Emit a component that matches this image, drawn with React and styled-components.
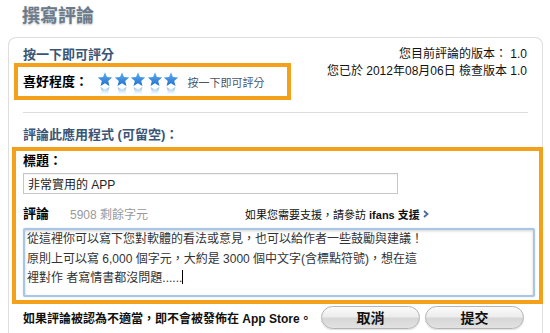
import React from "react";
import styled, { createGlobalStyle } from "styled-components";

const GlobalStyle = createGlobalStyle`
  * {
    box-sizing: border-box;
  }
  body {
    margin: 0;
    background: #fff;
    font-family: "Liberation Sans", Arial, "Noto Sans CJK TC", sans-serif;
    color: #111;
  }
`;

const Page = styled.div`
  width: 550px;
  height: 333px;
  overflow: hidden;
  background: #fff;
`;

const Title = styled.h1`
  margin: 0;
  height: 37px;
  padding: 4px 0 0 22px;
  font-size: 18px;
  line-height: 24px;
  font-weight: bold;
  color: #6b7a8b;
  text-shadow: 0 1px 2px rgba(0, 0, 0, 0.25);
`;

const Panel = styled.div`
  margin-left: 8px;
  width: 535px;
  height: 296px;
  border: 1px solid #dedede;
  border-bottom: none;
  border-radius: 8px 8px 0 0;
  padding: 0 0 0 5px;
  background: #fff;
`;

const HeaderRow = styled.div`
  display: flex;
  justify-content: space-between;
  padding-top: 8px;
`;

const Column = styled.div`
  display: flex;
  flex-direction: column;
`;

const SectionLabel = styled.div`
  padding-left: 9px;
  font-size: 13px;
  line-height: 17px;
  font-weight: bold;
  color: #3a5576;
`;

const InfoText = styled.div`
  padding-right: 15px;
  text-align: right;
  font-size: 12px;
  line-height: 17px;
  color: #111;
`;

const Highlight = styled.div`
  border: 4px solid #f5a01a;
  margin-left: ${(p) => p.$offset || 0}px;
  margin-right: ${(p) => p.$right || 0}px;
  padding: ${(p) => p.$pad};
`;

const RatingBox = styled(Highlight)`
  width: 277px;
  height: 37px;
  display: flex;
  align-items: center;
`;

const StrongLabel = styled.span`
  font-size: 13px;
  line-height: 17px;
  font-weight: bold;
  color: #000;
  width: ${(p) => (p.$width ? `${p.$width}px` : "auto")};
  flex-shrink: 0;
`;

const StarRow = styled.div`
  display: flex;
  align-self: flex-start;
  margin-top: 5px;
`;

const Hint = styled.span`
  margin-left: 8px;
  font-size: 11px;
  color: #4a5668;
`;

const Divider = styled.div`
  height: 1px;
  background: #dcdcdc;
  margin: 12px 14px 0 9px;
`;

const CommentLabel = styled(SectionLabel)`
  margin-top: 13px;
  margin-bottom: 4px;
`;

const FieldLabel = styled.div`
  font-size: 13px;
  line-height: 17px;
  font-weight: bold;
  color: #000;
  padding-top: 1px;
`;

const TextInput = styled.input`
  display: block;
  margin-top: 4px;
  width: 375px;
  height: 21px;
  border: 1px solid #c6c6c6;
  box-shadow: inset 0 1px 1px rgba(0, 0, 0, 0.06);
  padding: 0 4px;
  font-family: inherit;
  font-size: 12px;
  color: #222;
  background: #fff;
  outline: none;
`;

const ReviewRow = styled.div`
  display: flex;
  align-items: center;
  margin-top: 11px;
  height: 17px;
`;

const LeftGroup = styled.div`
  width: 222px;
  display: flex;
  align-items: center;
  flex-shrink: 0;
`;

const Remaining = styled.span`
  margin-left: 21px;
  font-size: 12px;
  color: #9a9a9a;
`;

const Support = styled.span`
  display: flex;
  align-items: center;
  gap: 3px;
  font-size: 11px;
  color: #111;
  b {
    font-weight: bold;
  }
`;

const TextBox = styled.div`
  margin-top: 6px;
  width: 512px;
  height: 69px;
  border: 2px solid #a9c6e6;
  border-radius: 2px;
  box-shadow: inset 0 1px 3px rgba(0, 0, 0, 0.18), 0 0 2px #d2e2f3;
  padding: 0 2px;
  font-size: 12px;
  line-height: 19.5px;
  color: #333;
  background: #fff;
  white-space: nowrap;
`;

const Caret = styled.span`
  display: inline-block;
  width: 1px;
  height: 14px;
  background: #000;
  vertical-align: -2px;
`;

const BottomRow = styled.div`
  display: flex;
  align-items: center;
  height: 26px;
  padding: 0 18px 0 9px;
`;

const Notice = styled.span`
  font-size: 12px;
  font-weight: bold;
  color: #111;
`;

const Buttons = styled.div`
  margin-left: auto;
  display: flex;
  gap: 5px;
`;

const Button = styled.button`
  width: 99px;
  height: 23px;
  border: 1px solid #b4b4b4;
  border-radius: 12px;
  background: linear-gradient(
    to bottom,
    #fbfbfb 0%,
    #ececec 48%,
    #d6d6d6 52%,
    #e2e2e2 100%
  );
  box-shadow: 0 1px 1px rgba(0, 0, 0, 0.12);
  font-family: inherit;
  font-size: 14px;
  font-weight: bold;
  color: #111;
  padding: 0;
  cursor: pointer;
`;

function Star() {
  const pts =
    "8,0.2 9.95,5.1 15.23,5.45 11.2,8.9 12.47,13.95 8,11.2 3.53,13.95 4.8,8.9 0.77,5.45 6.05,5.1";
  return (
    <svg width="16.5" height="24" viewBox="0 0 16.5 24">
      <defs>
        <linearGradient id="starFill" x1="0" y1="0" x2="0" y2="1">
          <stop offset="0" stopColor="#62b0f2" />
          <stop offset="1" stopColor="#1f6fca" />
        </linearGradient>
        <linearGradient id="starRef" x1="0" y1="1" x2="0" y2="0">
          <stop offset="0" stopColor="#6aaee8" stopOpacity="0.85" />
          <stop offset="0.55" stopColor="#a9d0f2" stopOpacity="0" />
        </linearGradient>
      </defs>
      <polygon points={pts} fill="url(#starFill)" />
      <g transform="translate(0 29) scale(1 -1)">
        <polygon points={pts} fill="url(#starRef)" />
      </g>
    </svg>
  );
}

function Chevron() {
  return (
    <svg width="6" height="8" viewBox="0 0 6 8">
      <path d="M1 1 L4.5 4 L1 7" fill="none" stroke="#4a6d96" strokeWidth="1.8" />
    </svg>
  );
}

export default function App() {
  return (
    <Page>
      <GlobalStyle />
      <Title>撰寫評論</Title>
      <Panel>
        <HeaderRow>
          <Column>
            <SectionLabel>按一下即可評分</SectionLabel>
            <RatingBox $pad="0 0 0 5px">
              <StrongLabel $width={74}>喜好程度：</StrongLabel>
              <StarRow>
                {[0, 1, 2, 3, 4].map((i) => (
                  <Star key={i} />
                ))}
              </StarRow>
              <Hint>按一下即可評分</Hint>
            </RatingBox>
          </Column>
          <InfoText>
            您目前評論的版本： 1.0
            <br />
            您已於 2012年08月06日 檢查版本 1.0
          </InfoText>
        </HeaderRow>
        <Divider />
        <CommentLabel>評論此應用程式 (可留空)：</CommentLabel>
        <Highlight $offset={-2} $right={-1} $pad="0 4px 3px 7px">
          <FieldLabel>標題：</FieldLabel>
          <TextInput defaultValue="非常實用的 APP" />
          <ReviewRow>
            <LeftGroup>
              <StrongLabel>評論</StrongLabel>
              <Remaining>5908 剩餘字元</Remaining>
            </LeftGroup>
            <Support>
              <span>
                如果您需要支援，請參訪 <b>ifans 支援</b>
              </span>
              <Chevron />
            </Support>
          </ReviewRow>
          <TextBox>
            從這裡你可以寫下您對軟體的看法或意見，也可以給作者一些鼓勵與建議！
            <br />
            原則上可以寫 6,000 個字元，大約是 3000 個中文字(含標點符號)，想在這
            <br />
            裡對作 者寫情書都沒問題......
            <Caret />
          </TextBox>
        </Highlight>
        <BottomRow>
          <Notice>如果評論被認為不適當，即不會被發佈在 App Store。</Notice>
          <Buttons>
            <Button>取消</Button>
            <Button>提交</Button>
          </Buttons>
        </BottomRow>
      </Panel>
    </Page>
  );
}
